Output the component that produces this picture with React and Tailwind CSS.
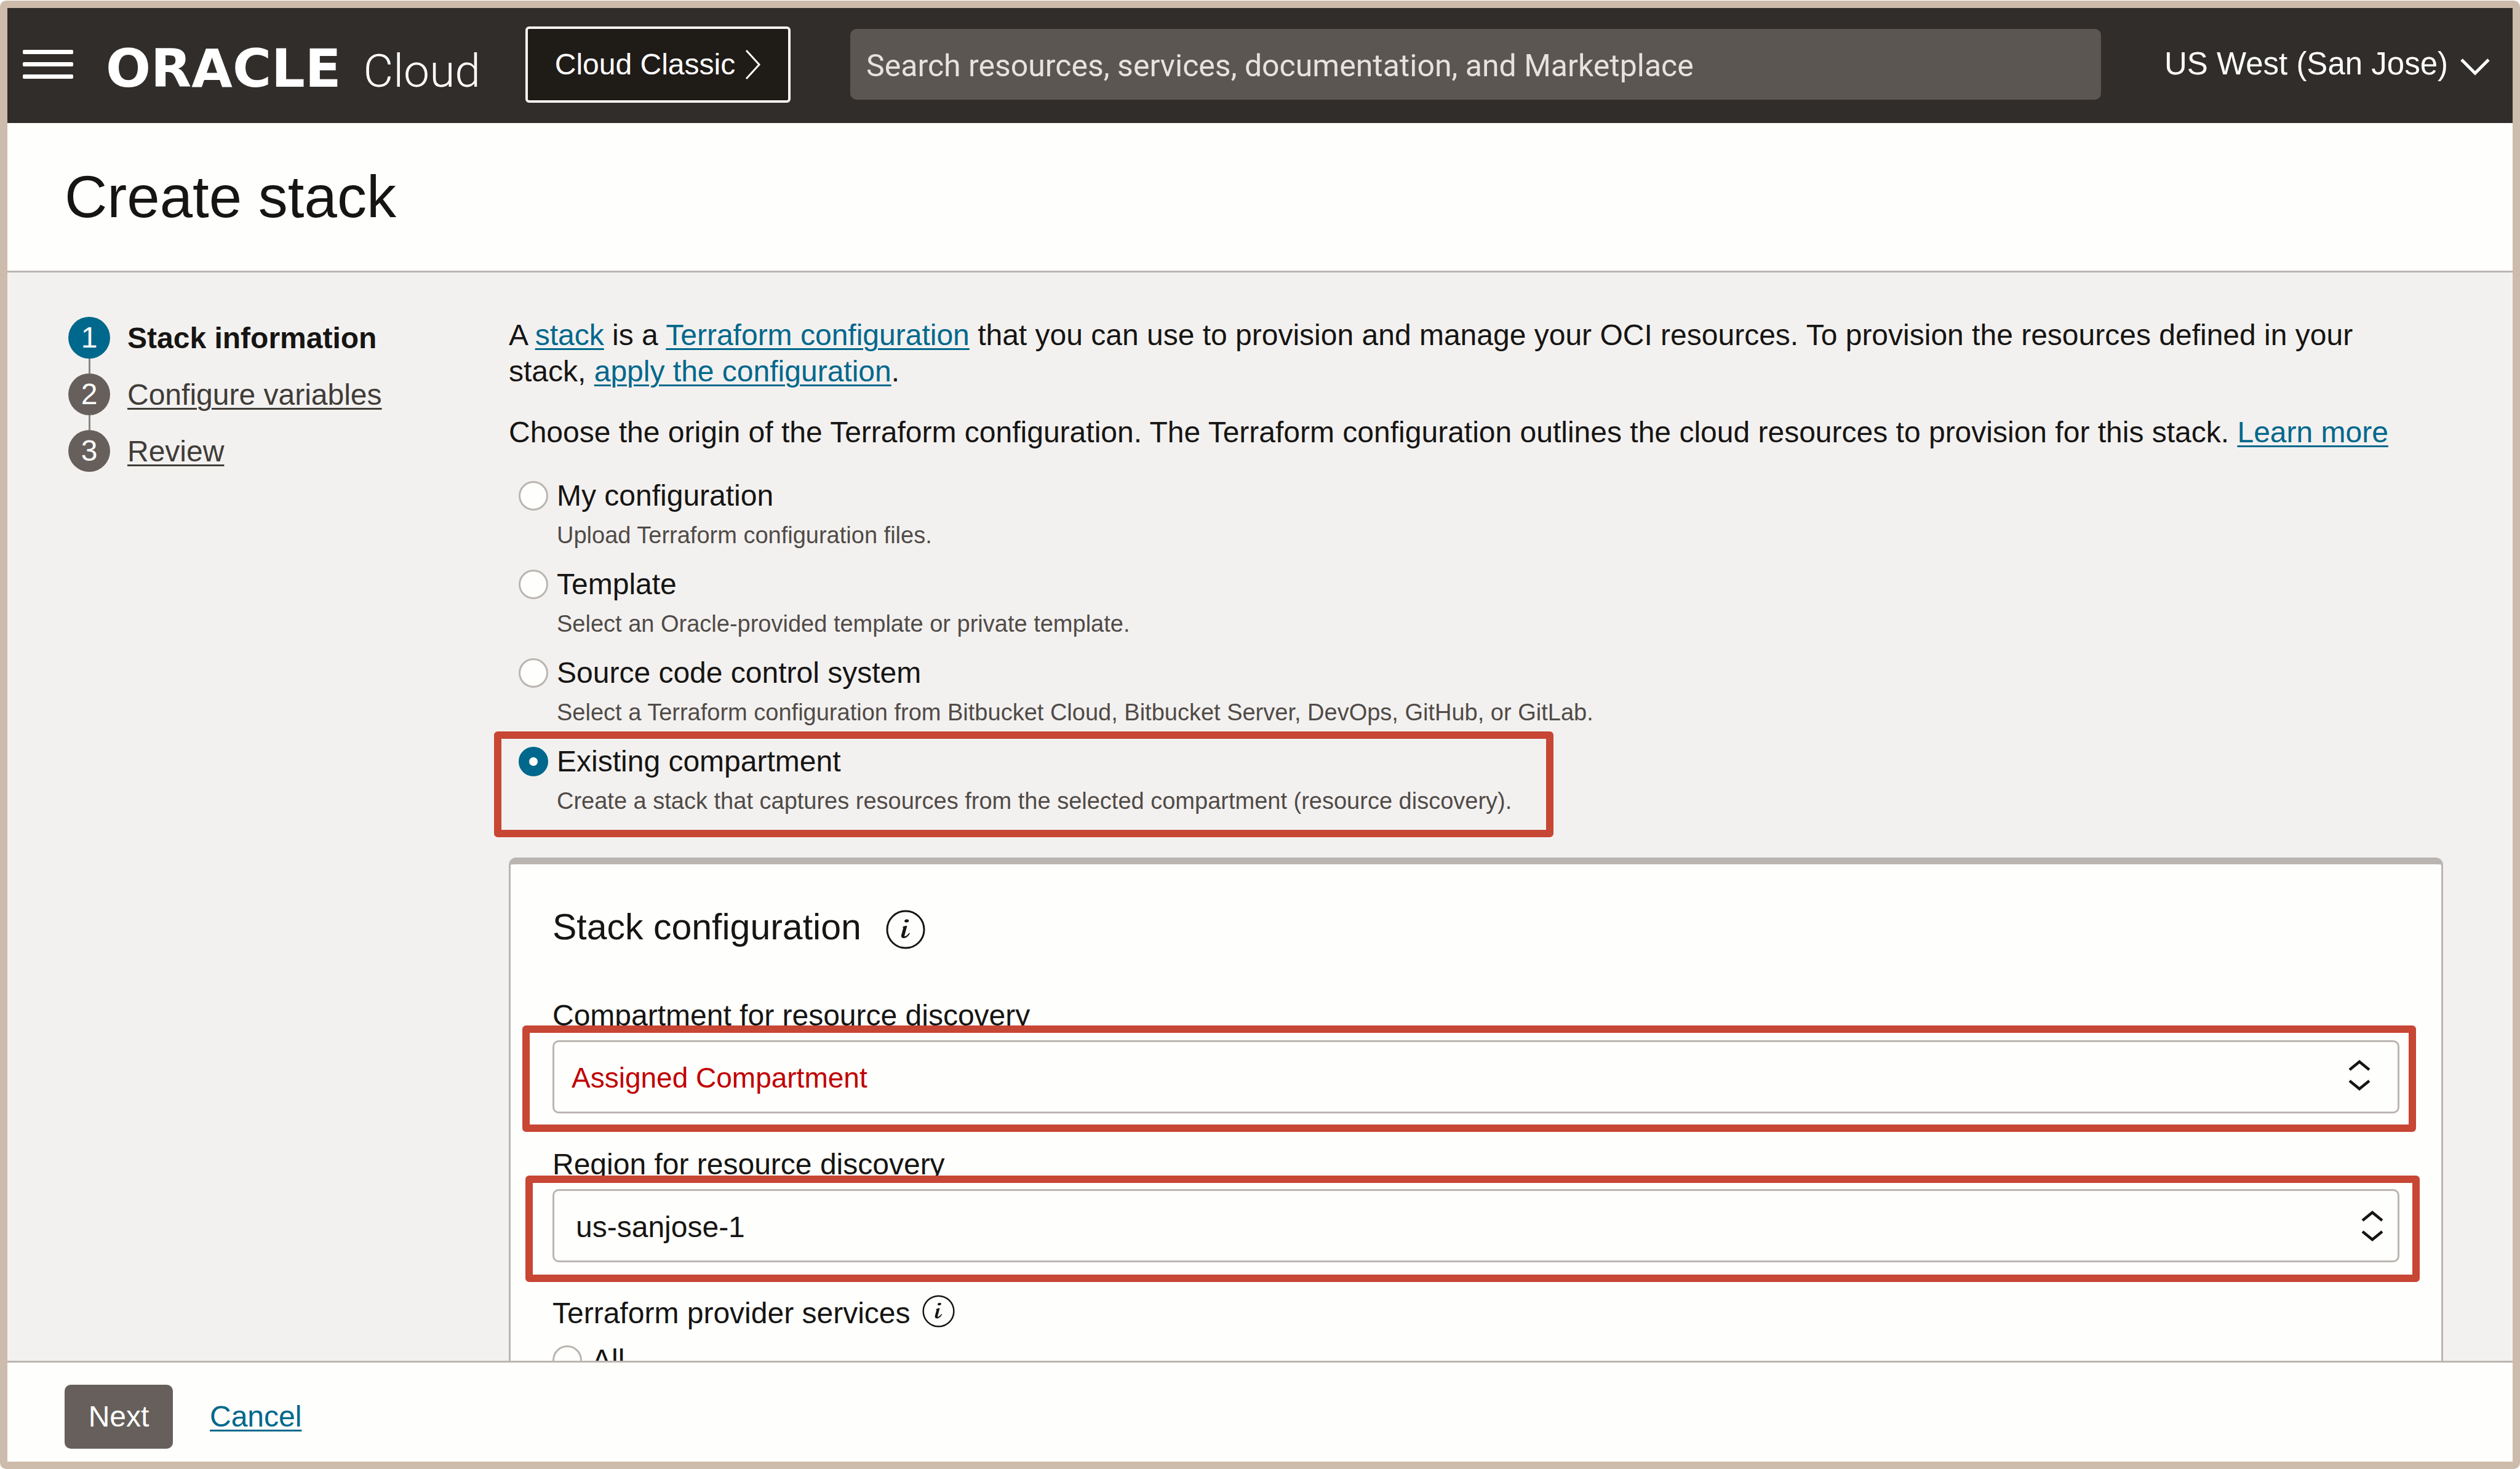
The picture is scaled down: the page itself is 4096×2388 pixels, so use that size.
import React from "react";

const linkClass =
  "text-[#00688c] underline decoration-[3px] underline-offset-[5px]";

function InfoIcon({ className }) {
  return (
    <svg viewBox="0 0 64 64" className={className} fill="none" aria-hidden="true">
      <circle cx="32" cy="32" r="30" stroke="currentColor" strokeWidth="3" />
      <ellipse cx="33.700" cy="18" rx="3.600" ry="2.500" transform="rotate(-12 33.7 18)" fill="currentColor" />
      <path
        d="M27.500 27.600c1.800-.9 4-1.500 6.200-1.500.5 0 .6.4.5.9L30.300 41.500c-.4 1.500.5 1.800 1.700 1.200 2.200-1.100 4.200-3 5.800-5.200l1.200.6c-1.800 4-5.500 8-9.800 8-3.600 0-4.900-2.200-4-5.600l2.800-10.600c.2-.9 0-1.300-.8-1.300h-.2z"
        fill="currentColor"
      />
    </svg>
  );
}

function UpDownIcon({ className }) {
  return (
    <svg
      viewBox="0 0 36 52"
      className={`pointer-events-none absolute h-[52px] w-[36px] ${className}`}
      fill="none"
      stroke="#161513"
      strokeWidth="4.5"
      aria-hidden="true"
    >
      <path d="M2 17 18 4l16 13M2 35l16 13 16-13" />
    </svg>
  );
}

function Radio({ id, name, checked }) {
  return (
    <input
      type="radio"
      id={id}
      name={name}
      defaultChecked={checked}
      className="h-12 w-12 shrink-0 appearance-none rounded-full border-[3px] border-[#bbb5b1] bg-[#fefefc] checked:border-[17px] checked:border-[#00688c]"
    />
  );
}

function Highlight({ className }) {
  return (
    <div
      className={`pointer-events-none absolute rounded-[6px] border-[12px] border-[#c74634] ${className}`}
    />
  );
}

function Step({ number, label, active, last }) {
  return (
    <li className="flex gap-7">
      <div className="flex flex-col items-center">
        <span
          className={`flex h-[68px] w-[68px] items-center justify-center rounded-full text-white ${
            active ? "bg-[#00688c]" : "bg-[#665f5b]"
          }`}
        >
          {number}
        </span>
        {!last && <span className="h-6 w-[3px] bg-[#8b8580]" />}
      </div>
      {active ? (
        <span className="font-bold leading-[70px]">{label}</span>
      ) : (
        <a
          href="#step"
          className="leading-[70px] text-[#403c38] underline decoration-[3px] underline-offset-[5px]"
        >
          {label}
        </a>
      )}
    </li>
  );
}

const origins = [
  {
    id: "my-configuration",
    label: "My configuration",
    help: "Upload Terraform configuration files.",
  },
  {
    id: "template",
    label: "Template",
    help: "Select an Oracle-provided template or private template.",
  },
  {
    id: "source-control",
    label: "Source code control system",
    help: "Select a Terraform configuration from Bitbucket Cloud, Bitbucket Server, DevOps, GitHub, or GitLab.",
  },
  {
    id: "existing-compartment",
    label: "Existing compartment",
    help: "Create a stack that captures resources from the selected compartment (resource discovery).",
    checked: true,
  },
];

function Header() {
  return (
    <header className="flex h-[187px] shrink-0 items-center bg-[#312d2a] pb-1 pl-[25px] pr-[37px] text-white">
      <button aria-label="Menu" className="flex w-[82px] shrink-0 flex-col gap-[13px]">
        <span className="h-[7px] w-full rounded-[2px] bg-white" />
        <span className="h-[7px] w-full rounded-[2px] bg-white" />
        <span className="h-[7px] w-full rounded-[2px] bg-white" />
      </button>
      <a
        href="#home"
        className="flex w-[735px] shrink-0 items-baseline gap-9 pl-[53px] pt-4 leading-[90px]"
      >
        <span className="font-['DejaVu_Sans',sans-serif] text-[86px] font-bold">ORACLE</span>
        <span className="font-[Roboto,sans-serif] text-[75px] font-light">Cloud</span>
      </a>
      <button className="flex h-[124px] w-[431px] shrink-0 items-center justify-center gap-4 rounded-[6px] border-4 border-[#f8f5f2] bg-[#1f1b17] text-[48px]">
        <span>Cloud Classic</span>
        <svg viewBox="0 0 26 48" className="h-12 w-[26px]" fill="none" stroke="white" strokeWidth="3" aria-hidden="true">
          <path d="M2 1 23 24 2 47" />
        </svg>
      </button>
      <input
        type="search"
        aria-label="Search"
        placeholder="Search resources, services, documentation, and Marketplace"
        className="ml-[97px] h-[115px] min-w-0 flex-1 rounded-[10px] bg-[#5b5651] px-[26px] pt-1 font-[Roboto,sans-serif] text-[50px] placeholder:text-[#e6e2de]"
      />
      <button className="ml-[103px] flex shrink-0 items-center gap-5 text-[51px]">
        <span>US West (San Jose)</span>
        <svg viewBox="0 0 48 28" className="mt-2 h-7 w-12" fill="none" stroke="white" strokeWidth="5" aria-hidden="true">
          <path d="M2 2 24 24 46 2" />
        </svg>
      </button>
    </header>
  );
}

function SelectField({ id, label, value, selectClass, iconClass, highlightClass }) {
  return (
    <div className="flex flex-col gap-[10px]">
      <label htmlFor={id} className="leading-[60px]">
        {label}
      </label>
      <div className="relative">
        <select
          id={id}
          className={`h-[119px] w-full appearance-none rounded-[10px] border-[3px] border-[#bbb5b1] bg-[#fefefc] pt-1 ${selectClass}`}
        >
          <option>{value}</option>
        </select>
        <UpDownIcon className={iconClass} />
        <Highlight className={highlightClass} />
      </div>
    </div>
  );
}

function StackConfiguration() {
  return (
    <section className="mt-[68px] rounded-t-[12px] border-x-[3px] border-t-[11px] border-[#bbb5b1] bg-[#fefefc] px-[68px] pb-24 pt-[66px]">
      <div className="flex items-end gap-10">
        <h2 className="text-[59px] leading-[72px]">Stack configuration</h2>
        <InfoIcon className="h-16 w-16" />
      </div>
      <div className="mt-[78px] flex flex-col gap-[53px]">
        <SelectField
          id="compartment"
          label="Compartment for resource discovery"
          value="Assigned Compartment"
          selectClass="pl-7 text-[46px] text-[#c00000]"
          iconClass="right-[47px] top-[31px]"
          highlightClass="-bottom-[30px] -left-[49px] -right-[27px] -top-6"
        />
        <SelectField
          id="region"
          label="Region for resource discovery"
          value="us-sanjose-1"
          selectClass="pl-[35px] text-[48px]"
          iconClass="right-[26px] top-[34px]"
          highlightClass="-bottom-8 -left-11 -right-[33px] -top-[22px]"
        />
        <fieldset>
          <legend className="flex items-start gap-5 leading-[60px]">
            Terraform provider services
            <InfoIcon className="h-[53px] w-[53px]" />
          </legend>
          <div className="mt-4 flex items-center gap-4">
            <Radio id="services-all" name="services" />
            <label htmlFor="services-all" className="leading-[60px]">
              All
            </label>
          </div>
        </fieldset>
      </div>
    </section>
  );
}

export default function App() {
  return (
    <div className="h-screen bg-white pt-px">
      <div className="flex h-full flex-col overflow-hidden rounded-[10px] border-[12px] border-[#cdbbab] bg-[#fefefc] font-['Liberation_Sans',Arial,sans-serif] text-[48px] text-[#161513]">
        <Header />
        <div className="flex h-[243px] shrink-0 items-center border-b-[3px] border-[#bbb5b1] px-[93px]">
          <h1 className="text-[96px] leading-[112px]">Create stack</h1>
        </div>

        <div className="flex min-h-0 flex-1 overflow-hidden bg-[#f3f1f0] pt-[72px]">
          <nav aria-label="Steps" className="w-[815px] shrink-0 pl-[99px]">
            <ol>
              <Step number={1} label="Stack information" active />
              <Step number={2} label="Configure variables" />
              <Step number={3} label="Review" last />
            </ol>
          </nav>

          <main className="min-w-0 flex-1 pr-[113px]">
            <div className="flex flex-col gap-10 pr-12 leading-[59px]">
              <p>
                A <a href="#stack" className={linkClass}>stack</a> is a{" "}
                <a href="#terraform" className={linkClass}>Terraform configuration</a>{" "}
                that you can use to provision and manage your OCI resources. To
                provision the resources defined in your stack,{" "}
                <a href="#apply" className={linkClass}>apply the configuration</a>.
              </p>
              <p>
                Choose the origin of the Terraform configuration. The Terraform
                configuration outlines the cloud resources to provision for this
                stack. <a href="#learn" className={linkClass}>Learn more</a>
              </p>
            </div>

            <div
              role="radiogroup"
              aria-label="Origin of the Terraform configuration"
              className="mt-11 flex flex-col items-start gap-[26px] pl-4"
            >
              {origins.map((o) => (
                <div key={o.id} className="relative flex gap-[14px]">
                  <div className="flex h-[60px] items-center">
                    <Radio id={o.id} name="origin" checked={o.checked} />
                  </div>
                  <div className="flex flex-col gap-[10px]">
                    <label htmlFor={o.id} className="leading-[60px]">
                      {o.label}
                    </label>
                    <p className="text-[38px] leading-[48px] text-[#504b47]">{o.help}</p>
                  </div>
                  {o.checked && (
                    <Highlight className="-bottom-[35px] -left-10 -right-[68px] -top-[19px]" />
                  )}
                </div>
              ))}
            </div>

            <StackConfiguration />
          </main>
        </div>

        <footer className="flex h-[164px] shrink-0 items-center gap-[60px] border-t-[3px] border-[#bbb5b1] pl-[93px] pt-[14px]">
          <button className="h-[104px] w-[176px] rounded-[10px] bg-[#665f5b] text-white">
            Next
          </button>
          <a href="#cancel" className={linkClass}>
            Cancel
          </a>
        </footer>
      </div>
    </div>
  );
}
